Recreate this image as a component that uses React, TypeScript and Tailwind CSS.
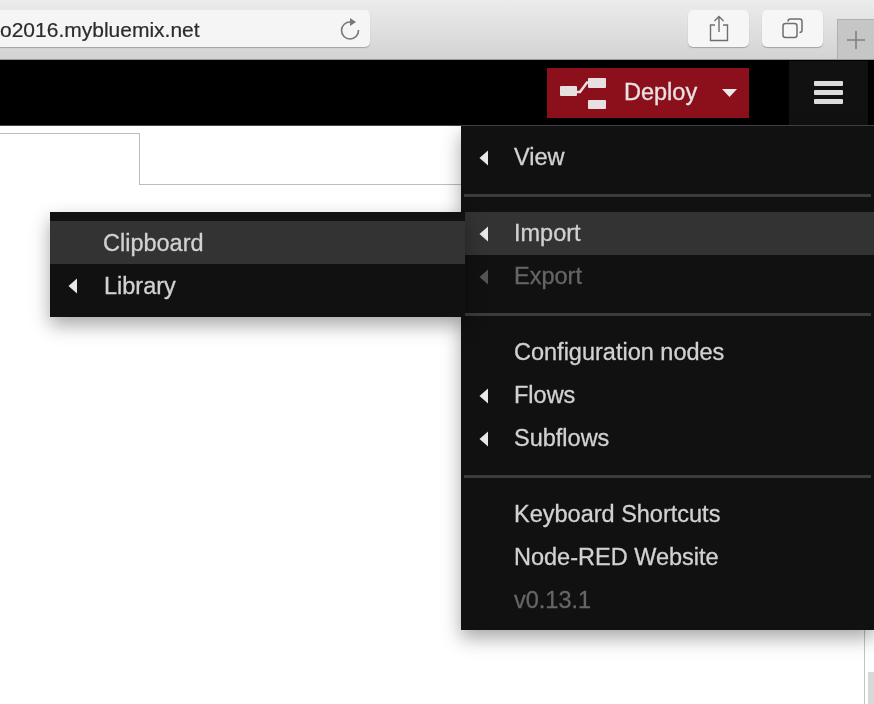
const font = { fontFamily: '"Liberation Sans", Arial, sans-serif' };

function Arrow({ dim }: { dim?: boolean }) {
  return (
    <svg width="9" height="16" viewBox="0 0 9 16" className="shrink-0">
      <path d="M9 0.5 L9 15.5 L0.5 8 Z" fill={dim ? "#555555" : "#e8e8e8"} />
    </svg>
  );
}

function Item({ label, arrow, dim, active, pad = "pl-[53px]", arrowPad = "pl-[18px]", arrowGap = "w-[26px]", sub }: { label: string; arrow?: boolean; dim?: boolean; active?: boolean; pad?: string; arrowPad?: string; arrowGap?: string; sub?: boolean }) {
  return (
    <div className={`h-[43px] flex items-center text-[23.5px] [-webkit-text-stroke:0.3px] ${arrow ? arrowPad : pad} ${active ? "bg-[#333333]" : ""} ${dim ? "text-[#666666]" : "text-[#d2d2d2]"}`}>
      {arrow && (
        <>
          <Arrow dim={dim} />
          <div className={arrowGap} />
        </>
      )}
      <span className={sub ? "relative top-[1px]" : ""}>{label}</span>
    </div>
  );
}

function Divider() {
  return <div className="h-[3px] my-[15px] mx-[3px] bg-[#3c3c3c]" />;
}

export default function App() {
  return (
    <div style={font} className="relative h-[704px] w-[874px] overflow-hidden bg-white flex flex-col blur-[0.6px]">
      <div className="h-[60px] shrink-0 bg-gradient-to-b from-[#ececec] to-[#d4d3d4] border-b border-[#9a9a9a] flex items-start relative">
        <div className="mt-[10px] w-[370px] h-[37px] bg-[#f5f5f5] rounded-r-[5px] shadow-[0_1px_1px_rgba(0,0,0,0.25)] flex items-center justify-between pr-[9px]">
          <span className="relative top-[1px] text-[21px] text-[#2c2c2c] [-webkit-text-stroke:0.2px]">o2016.mybluemix.net</span>
          <svg width="22" height="24" viewBox="0 0 22 24" fill="none" stroke="#777777" strokeWidth="1.6">
            <path d="M11.5 5 A8.5 8.5 0 1 0 19.5 13" />
            <path d="M11 1 L17 5 L11 9 Z" fill="#777777" stroke="none" />
          </svg>
        </div>
        <div className="flex-1" />
        <div className="mt-[10px] w-[61px] h-[37px] bg-[#f6f6f6] rounded-[5px] shadow-[0_1px_1px_rgba(0,0,0,0.25)] flex items-center justify-center">
          <svg width="20" height="27" viewBox="0 0 20 27" fill="none" stroke="#6f6f6f" strokeWidth="1.4">
            <path d="M6 10 H1.5 V25.5 H18.5 V10 H14" />
            <path d="M10 17 V2 M5.5 6 L10 1.5 L14.5 6" />
          </svg>
        </div>
        <div className="ml-[13px] mt-[10px] w-[61px] h-[37px] bg-[#f6f6f6] rounded-[5px] shadow-[0_1px_1px_rgba(0,0,0,0.25)] flex items-center justify-center">
          <svg width="21" height="21" viewBox="0 0 21 21" fill="none" stroke="#6f6f6f" strokeWidth="1.5">
            <rect x="1" y="5.5" width="14" height="14" rx="2.5" />
            <path d="M6 3.5 Q6 1 8.5 1 H17.5 Q20 1 20 3.5 V12 Q20 14.5 17.5 14.5" />
          </svg>
        </div>
        <div className="ml-[14px] mt-[19px] w-[37px] h-[40px] bg-[#c6c6c6] border-l border-t border-[#b0b0b0] flex items-center justify-center">
          <svg width="20" height="20" viewBox="0 0 20 20" stroke="#7f7f7f" strokeWidth="1.6">
            <path d="M10 1 V19 M1 10 H19" />
          </svg>
        </div>
      </div>

      <div className="h-[66px] shrink-0 bg-black border-b border-[#444444] flex items-end justify-end">
        <div className="self-start mt-[8px] w-[202px] h-[50px] bg-[#8c101c] flex items-center pl-[13px]">
          <svg width="46" height="31" viewBox="0 0 46 31" fill="#e6e0e0" className="shrink-0">
            <rect x="0" y="8" width="17" height="10" rx="1" />
            <path d="M16 14 L20 14 L27 4.5 L29 4.5" stroke="#e6e0e0" strokeWidth="2.5" fill="none" />
            <rect x="28" y="0" width="18" height="10" rx="1" />
            <rect x="28" y="22" width="18" height="9" rx="1" />
          </svg>
          <span className="ml-[18px] text-[23.5px] text-[#e8e4e4] [-webkit-text-stroke:0.3px]">Deploy</span>
          <svg width="15" height="8" viewBox="0 0 15 8" className="ml-[25px]">
            <path d="M0 0 H15 L7.5 8 Z" fill="#ece8e8" />
          </svg>
        </div>
        <div className="ml-[40px] mr-[6px] w-[79px] h-[64px] bg-[#111111] flex items-center justify-center pb-[2px]">
          <div className="flex flex-col gap-[4px]">
            <div className="w-[29px] h-[5px] rounded-[1px] bg-[#dcdcdc]" />
            <div className="w-[29px] h-[5px] rounded-[1px] bg-[#dcdcdc]" />
            <div className="w-[29px] h-[5px] rounded-[1px] bg-[#dcdcdc]" />
          </div>
        </div>
      </div>

      <div className="relative flex-1">
        <div className="flex pt-[7px]">
          <div className="w-[140px] h-[52px] border-t border-r border-[#bcbcbc]" />
          <div className="flex-1 h-[52px] border-b border-[#bcbcbc]" />
        </div>

        <div className="absolute right-[9px] top-[504px] bottom-0 w-px bg-[#c4c4c4]" />
        <div className="absolute right-0 top-[546px] bottom-0 w-[6px] bg-[#d8d8d8]" />

        <div className="absolute left-[461px] top-0 right-0 h-[504px] bg-[#111111] pt-[10px] shadow-[0_8px_18px_rgba(0,0,0,0.35)]">
          <Item label="View" arrow />
          <Divider />
          <div className="pl-[4px]">
            <Item label="Import" arrow active arrowPad="pl-[14px]" />
          </div>
          <Item label="Export" arrow dim />
          <Divider />
          <Item label="Configuration nodes" />
          <Item label="Flows" arrow />
          <Item label="Subflows" arrow />
          <Divider />
          <Item label="Keyboard Shortcuts" />
          <Item label="Node-RED Website" />
          <Item label="v0.13.1" dim />
        </div>

        <div className="absolute left-[50px] top-[86px] w-[415px] h-[105px] bg-[#111111] pt-[9px] shadow-[0_8px_18px_rgba(0,0,0,0.35)]">
          <Item label="Clipboard" active sub />
          <Item label="Library" arrow arrowPad="pl-[18px]" arrowGap="w-[27px]" sub />
        </div>
      </div>
    </div>
  );
}
